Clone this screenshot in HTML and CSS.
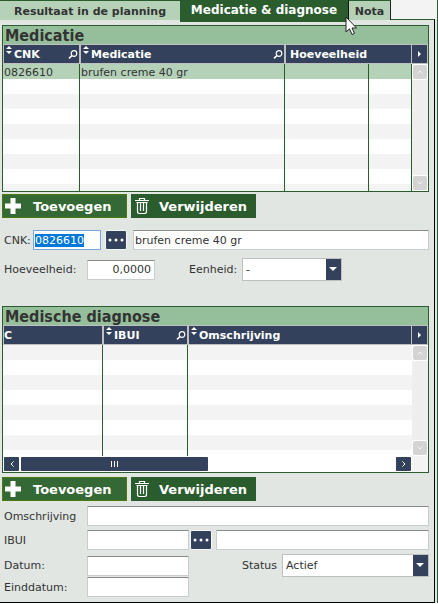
FILE: index.html
```html
<!DOCTYPE html>
<html lang="nl">
<head>
<meta charset="utf-8">
<title>Medicatie &amp; diagnose</title>
<link rel="stylesheet" href="styles.css">
</head>
<body>
<svg class="symbols" width="0" height="0" aria-hidden="true">
  <symbol id="sort" viewBox="0 0 6 8"><path d="M3 0 6 3H0zM3 8 0 5H6z" fill="currentColor"/></symbol>
  <symbol id="search" viewBox="0 0 10 9"><circle cx="6" cy="3.500" r="2.800" fill="none" stroke="currentColor" stroke-width="1.200"/><path d="M4 5.500 1 8.300" stroke="currentColor" stroke-width="1.600"/></symbol>
  <symbol id="plus" viewBox="0 0 16 16"><path d="M5.500 0h5v5.500H16v5h-5.500V16h-5v-5.500H0v-5h5.500z" fill="currentColor"/></symbol>
  <symbol id="bin" viewBox="0 0 14 16"><path d="M0 2.500H14M4.500 2V.5h5V2M2.500 4v9.500q0 2 2 2h5q2 0 2-2V4M5.500 5v8M8.500 5v8" fill="none" stroke="currentColor" stroke-width="1.200"/><path d="M1.500 4.500h11" stroke="currentColor"/></symbol>
  <symbol id="dots" viewBox="0 0 16 4"><circle cx="2" cy="2" r="1.500" fill="currentColor"/><circle cx="8" cy="2" r="1.500" fill="currentColor"/><circle cx="14" cy="2" r="1.500" fill="currentColor"/></symbol>
  <symbol id="play" viewBox="0 0 3 6"><path d="M0 0 3 3 0 6z" fill="currentColor"/></symbol>
  <symbol id="up" viewBox="0 0 6 4"><path d="M.5 3.500 3 1l2.500 2.500" fill="none" stroke="currentColor"/></symbol>
  <symbol id="down" viewBox="0 0 6 4"><path d="M.5.5 3 3 5.500.5" fill="none" stroke="currentColor"/></symbol>
  <symbol id="left" viewBox="0 0 4 6"><path d="M3.500.5 1 3l2.500 2.500" fill="none" stroke="currentColor"/></symbol>
  <symbol id="right" viewBox="0 0 4 6"><path d="M.5.5 3 3 .5 5.500" fill="none" stroke="currentColor"/></symbol>
</svg>

<div class="window">
  <nav class="tabs">
    <a class="tab tab-first" href="#planning">Resultaat in de planning</a>
    <a class="tab tab-active" href="#medicatie" aria-current="page">Medicatie &amp; diagnose
      <svg class="cursor" width="13" height="20" viewBox="0 0 13 20" aria-hidden="true"><path d="M1 1V16L4.500 12.800 7 18.500 9.500 17.400 7 12H11.500z" fill="#fff" stroke="#222"/></svg>
    </a>
    <a class="tab tab-last" href="#nota">Nota</a>
    <span class="tab-rest"></span>
  </nav>

  <main class="panel">
    <section class="grid">
      <h2>Medicatie</h2>
      <div class="grid-body">
        <div class="rows">
          <table class="lined">
            <colgroup><col class="c77"><col class="c205"><col class="c84"><col></colgroup>
            <thead><tr>
              <th><span class="head"><svg class="sort"><use href="#sort"/></svg>CNK<svg class="search"><use href="#search"/></svg></span></th>
              <th><span class="head"><svg class="sort"><use href="#sort"/></svg>Medicatie<svg class="search"><use href="#search"/></svg></span></th>
              <th colspan="2"><span class="head head-pad">Hoeveelheid</span></th>
            </tr></thead>
            <tbody>
              <tr class="selected"><td>0826610</td><td>brufen creme 40 gr</td><td></td><td></td></tr>
              <tr><td></td><td></td><td></td><td></td></tr>
              <tr><td></td><td></td><td></td><td></td></tr>
              <tr><td></td><td></td><td></td><td></td></tr>
              <tr><td></td><td></td><td></td><td></td></tr>
              <tr><td></td><td></td><td></td><td></td></tr>
              <tr><td></td><td></td><td></td><td></td></tr>
              <tr><td></td><td></td><td></td><td></td></tr>
              <tr><td></td><td></td><td></td><td></td></tr>
            </tbody>
          </table>
        </div>
        <div class="vscroll">
          <button class="more" type="button" aria-label="Meer kolommen"><svg width="3" height="6"><use href="#play"/></svg></button>
          <button class="step" type="button" aria-label="Omhoog"><svg width="6" height="4"><use href="#up"/></svg></button>
          <span class="track"></span>
          <button class="step" type="button" aria-label="Omlaag"><svg width="6" height="4"><use href="#down"/></svg></button>
        </div>
      </div>
    </section>

    <div class="actions">
      <button class="action action-add" type="button"><svg width="16" height="16"><use href="#plus"/></svg>Toevoegen</button>
      <button class="action" type="button"><svg width="14" height="16"><use href="#bin"/></svg>Verwijderen</button>
    </div>

    <form class="form form-med">
      <div class="line line-cnk">
        <label for="cnk">CNK:</label>
        <input class="focus" id="cnk" type="text" value="0826610">
        <button class="dots" type="button" aria-label="CNK zoeken"><svg width="16" height="4"><use href="#dots"/></svg></button>
        <input class="grow" type="text" aria-label="Medicatie" value="brufen creme 40 gr">
      </div>
      <div class="line">
        <label class="label" for="qty">Hoeveelheid:</label>
        <input class="qty" id="qty" type="text" value="0,0000">
        <label class="unit-label" for="unit">Eenheid:</label>
        <span class="select unit"><select id="unit"><option>-</option></select></span>
      </div>
    </form>

    <section class="grid">
      <h2>Medische diagnose</h2>
      <div class="grid-body">
        <div class="rows rows-short">
          <table class="odd">
            <colgroup><col class="c100"><col class="c85"><col></colgroup>
            <thead><tr>
              <th><span class="head">C</span></th>
              <th><span class="head"><svg class="sort"><use href="#sort"/></svg>IBUI<svg class="search"><use href="#search"/></svg></span></th>
              <th><span class="head"><svg class="sort"><use href="#sort"/></svg>Omschrijving</span></th>
            </tr></thead>
            <tbody>
              <tr><td></td><td></td><td></td></tr>
              <tr><td></td><td></td><td></td></tr>
              <tr><td></td><td></td><td></td></tr>
              <tr><td></td><td></td><td></td></tr>
              <tr><td></td><td></td><td></td></tr>
              <tr><td></td><td></td><td></td></tr>
              <tr><td></td><td></td><td></td></tr>
              <tr><td></td><td></td><td></td></tr>
            </tbody>
          </table>
        </div>
        <div class="vscroll">
          <button class="more" type="button" aria-label="Meer kolommen"><svg width="3" height="6"><use href="#play"/></svg></button>
          <button class="step" type="button" aria-label="Omhoog"><svg width="6" height="4"><use href="#up"/></svg></button>
          <span class="track"></span>
          <button class="step" type="button" aria-label="Omlaag"><svg width="6" height="4"><use href="#down"/></svg></button>
        </div>
        <div class="hscroll">
          <button class="hstep" type="button" aria-label="Links"><svg width="4" height="6"><use href="#left"/></svg></button>
          <span class="thumb"><i></i><i></i><i></i></span>
          <span class="grow"></span>
          <button class="hstep" type="button" aria-label="Rechts"><svg width="4" height="6"><use href="#right"/></svg></button>
        </div>
        <span class="corner"></span>
      </div>
    </section>

    <div class="actions actions-low">
      <button class="action action-add" type="button"><svg width="16" height="16"><use href="#plus"/></svg>Toevoegen</button>
      <button class="action" type="button"><svg width="14" height="16"><use href="#bin"/></svg>Verwijderen</button>
    </div>

    <form class="form form-diag">
      <div class="line">
        <label class="label" for="desc">Omschrijving</label>
        <input class="grow" id="desc" type="text">
      </div>
      <div class="line">
        <label class="label" for="ibui">IBUI</label>
        <input class="mid" id="ibui" type="text">
        <button class="dots dots-near" type="button" aria-label="IBUI zoeken"><svg width="16" height="4"><use href="#dots"/></svg></button>
        <input class="grow" type="text" aria-label="IBUI omschrijving">
      </div>
      <div class="period">
        <div class="line">
          <label class="label" for="date">Datum:</label>
          <input class="mid" id="date" type="text">
          <label class="status-label" for="status">Status</label>
          <span class="select status"><select id="status"><option>Actief</option></select></span>
        </div>
        <div class="line">
          <label class="label" for="end">Einddatum:</label>
          <input class="mid" id="end" type="text">
        </div>
      </div>
    </form>
  </main>
</div>
<script src="script.js"></script>
</body>
</html>
```
FILE: styles.css
```css
:root {
  --green: #2b5c2e;
  --light: #b5d2b9;
  --navy: #33415c;
  --grey: #bfbfbf;
  --bg: #e1e6e2;
  --text: #333;
}

* { box-sizing: border-box; }

body {
  margin: 0;
  background: #fff;
  color: var(--text);
  font: 11px/15px Verdana, "DejaVu Sans", sans-serif;
}

button, input, select { font: inherit; color: inherit; margin: 0; padding: 0; border: 0; border-radius: 0; }
svg { display: block; flex: none; }
.symbols { position: absolute; }
.grow { flex: 1; min-width: 0; }

.window {
  background: var(--bg);
  border-right: 1px solid var(--green);
  padding-right: 2px;
}

/* Tabs */
.tabs {
  display: flex;
  align-items: flex-start;
  height: 19px;
  margin-right: -2px;
  background: #f3f3f3;
}
.tab {
  position: relative;
  flex: none;
  height: 20px;
  border-top: 1px solid var(--green);
  background: var(--light);
  color: var(--text);
  font-weight: bold;
  line-height: 21px;
  text-align: center;
  text-decoration: none;
}
.tab-first { width: 180px; }
.tab-active {
  z-index: 1;
  width: 168px;
  height: 22px;
  background: var(--green);
  color: #fff;
  font-size: 12px;
  line-height: 19px;
}
.tab-last { width: 43px; border-left: 1px solid #111; border-right: 1px solid #222; }
.tab-rest { flex: 1; }
.cursor { position: absolute; right: -10px; top: 15px; }

.panel {
  padding: 5px 5px 5px 2px;
  border-top: 1px solid var(--green);
  border-right: 1px solid #000;
  border-bottom: 1px solid #000;
}

/* Grids */
.grid { border: 1px solid var(--green); background: #fff; }
.grid h2 {
  height: 18px;
  margin: 0;
  padding-left: 2px;
  background: #95be9a;
  font: bold 16px/20px Tahoma, "DejaVu Sans Condensed", "Noto Sans", sans-serif;
}
.grid-body { display: grid; grid-template-columns: 1fr 16px; }
.rows { height: 147px; overflow: hidden; }
.rows-short { height: 131px; }
table { width: 100%; table-layout: fixed; border-collapse: separate; border-spacing: 0; }
.c77 { width: 77px; }
.c205 { width: 205px; }
.c84 { width: 84px; }
.c100 { width: 100px; }
.c85 { width: 85px; }
th {
  height: 20px;
  padding: 0;
  border: 1px solid var(--grey);
  background: var(--navy);
  color: #fff;
  text-align: left;
}
.head { display: flex; height: 18px; line-height: 19px; }
.head-pad { padding-left: 4px; }
.sort { width: 6px; height: 8px; margin: 1px 2px 0 2px; }
.search { width: 10px; height: 9px; margin: 5px 1px 0 auto; }
td { height: 15px; padding: 2px 1px 0; border-right: 1px solid var(--green); line-height: 13px; white-space: nowrap; }
.odd td:last-child { border-right: 0; }
tbody tr:nth-child(odd) { background: #f3f3f3; }
tbody tr.selected { background: var(--light); }

.vscroll { display: flex; flex-direction: column; background: #fff; }
.more {
  display: grid;
  place-items: center;
  height: 20px;
  border: 1px solid var(--grey);
  border-left: 0;
  background: var(--navy);
  color: #fff;
}
.step {
  display: grid;
  place-items: center;
  height: 14px;
  margin: 1px;
  border-radius: 2px;
  background: #d3d3d3;
  color: #f3f3f3;
}
.track { flex: 1; background: #eee; }
.hscroll { display: flex; gap: 2px; height: 16px; padding: 1px; }
.hstep, .thumb { display: flex; align-items: center; justify-content: center; background: var(--navy); color: #fff; border-radius: 1px; }
.hstep { width: 15px; }
.thumb { width: 46%; gap: 2px; }
.thumb i { width: 1px; height: 6px; background: #fff; }
.corner { background: #f3f3f3; }

/* Actions */
.actions { display: flex; gap: 4px; padding-top: 2px; }
.actions-low { padding-top: 4px; }
.action {
  display: flex;
  align-items: center;
  gap: 10px;
  width: 125px;
  height: 24px;
  padding-left: 4px;
  background: var(--green);
  color: #fff;
  font-size: 13px;
  font-weight: bold;
}
.action-add { gap: 12px; padding-left: 2px; border: 1px solid #4b7a0c; background: #346834; }

/* Forms */
.form { display: flex; flex-direction: column; }
.form-med { gap: 8px; padding: 12px 0 25px; }
.form-diag { gap: 4px; padding-top: 5px; }
.line { display: flex; align-items: center; min-height: 20px; }
.label { width: 85px; padding-left: 2px; }
.line-cnk { padding-left: 2px; }
.line-cnk .dots { margin: 0 6px 0 4px; }
input {
  width: 68px;
  height: 20px;
  padding: 0 1px;
  border: 1px solid #c8cdd0;
  border-top-color: #8a8a8a;
  background: #fff;
  outline: 0;
}
input::selection { background: #0078d7; color: #fff; }
.focus { border: 1px solid #7da7dc; }
.line-cnk label { width: 29px; }
.qty { padding-right: 3px; text-align: right; }
.mid { width: 102px; }
.dots {
  display: grid;
  place-items: center;
  width: 22px;
  height: 20px;
  border: 1px solid #f5f7f5;
  border-radius: 2px;
  background: var(--navy);
  color: #fff;
}
.dots-near { margin: 0 4px 0 1px; }
.unit-label { margin-left: 34px; width: 53px; }
.status-label { margin-left: auto; margin-right: 5px; }
.select { position: relative; display: block; }
.select::after {
  content: "";
  position: absolute;
  right: 5px;
  top: 9px;
  border: 4px solid transparent;
  border-top-color: #fff;
  border-bottom: 0;
  pointer-events: none;
}
select {
  display: block;
  appearance: none;
  width: 100%;
  height: 23px;
  padding: 0 20px 0 3px;
  border: 1px solid var(--grey);
  background: linear-gradient(var(--navy), var(--navy)) right / 15px 100% no-repeat #fff;
}
.unit { width: 100px; }
.status { width: 147px; }
```
FILE: script.js
```js
// The code field opens focused with its value selected.
const code = document.getElementById("cnk");
code.focus();
code.select();
```
